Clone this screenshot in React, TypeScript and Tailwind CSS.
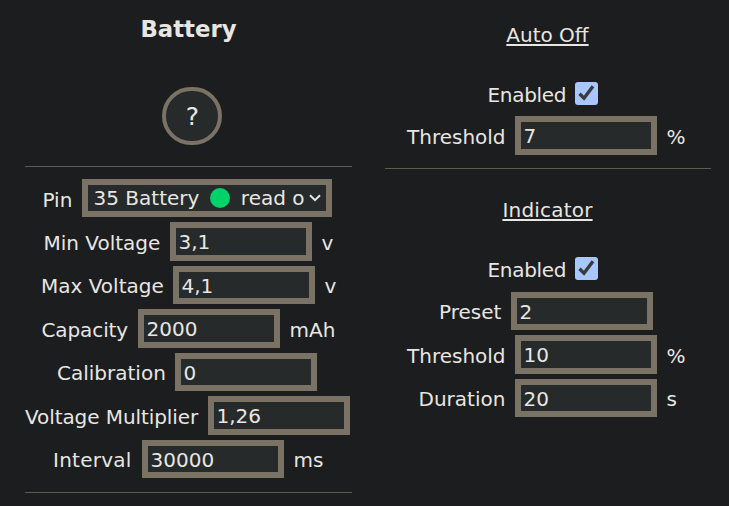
import { ReactNode } from "react";

const BOX =
  "h-[38.4px] shrink-0 border-[6px] border-[#7a7264] bg-[#262a2b] leading-[28px] whitespace-pre";

type FieldProps = {
  label: string;
  value: string;
  unit?: string;
  indent: string;
  labelWidth: string;
};

function Field({ label, value, unit, indent, labelWidth }: FieldProps) {
  return (
    <div className={`flex h-[43.5px] items-start ${indent}`}>
      <span className={`shrink-0 pt-[4.4px] leading-[32px] whitespace-nowrap ${labelWidth}`}>{label}</span>
      <div className={`w-[142px] pl-[2.5px] ${BOX}`}>{value}</div>
      {unit && <span className="pl-[9.5px] pt-[4.4px] leading-[32px]">{unit}</span>}
    </div>
  );
}

function Rule() {
  return <div className="h-px w-[327px] bg-[#615b4d]" />;
}

function Enabled() {
  return (
    <div className="flex h-6 items-start pl-[103.5px]">
      <span className="w-[87.5px] shrink-0 leading-[26px] tracking-[-0.3px]">Enabled</span>
      <svg className="h-[23px] w-[23px] shrink-0" viewBox="0 0 23 23">
        <rect width="23" height="23" rx="3" fill="#a8c7ff" />
        <path d="M4.5 11.8 L9 16.2 L18 4.3" fill="none" stroke="#3b3b3b" strokeWidth="3.4" />
      </svg>
    </div>
  );
}

function SectionTitle({ children }: { children: ReactNode }) {
  return (
    <div className="w-[327px] text-center leading-[26px]">
      <span className="underline decoration-2 underline-offset-[2px] [text-decoration-skip-ink:none]">{children}</span>
    </div>
  );
}

export default function App() {
  return (
    <div className="flex h-[506px] w-[729px] overflow-hidden bg-[#1c1d1e] font-['Verdana','DejaVu_Sans',sans-serif] text-[20px] text-[#e8e6e3]">
      <section className="w-[360px] shrink-0 pl-[25px]">
        <h1 className="mt-[15px] h-[28px] w-[327px] text-center text-[22.8px] leading-[28px] font-bold">Battery</h1>
        <div className="mt-[44px] ml-[137px] flex h-[58px] w-[60px] items-center justify-center rounded-full border-4 border-[#7a7264] bg-[#262a2b] pt-[2px] pl-px text-[25px]">
          ?
        </div>
        <div className="mt-[21px]"><Rule /></div>
        <div className="mt-[11.8px]">
          <div className="flex h-[43.5px] items-start pl-[17.5px]">
            <span className="w-[39.5px] shrink-0 pt-[5px] leading-[32px]">Pin</span>
            <div className={`flex w-[250px] items-center pl-[5.5px] ${BOX}`}>
              <span>35 Battery</span>
              <span className="mt-px ml-[10.5px] h-5 w-5 rounded-full bg-[#00d26a]" />
              <span className="ml-[11px]">read o</span>
              <svg className="ml-[4.5px] h-[8px] w-[12px]" viewBox="0 0 12 8">
                <path d="M1 1.2 L6 6.2 L11 1.2" fill="none" stroke="#e8e6e3" strokeWidth="2" />
              </svg>
            </div>
          </div>
          <Field label="Min Voltage" value="3,1" unit="v" indent="pl-[18.5px]" labelWidth="w-[126.5px]" />
          <Field label="Max Voltage" value="4,1" unit="v" indent="pl-[16px]" labelWidth="w-[132px]" />
          <Field label="Capacity" value="2000" unit="mAh" indent="pl-[16.5px]" labelWidth="w-[96.5px] tracking-[-0.1px]" />
          <Field label="Calibration" value="0" indent="pl-[32px]" labelWidth="w-[118px]" />
          <Field label="Voltage Multiplier" value="1,26" indent="pl-0" labelWidth="w-[183px] tracking-[-0.08px]" />
          <Field label="Interval" value="30000" unit="ms" indent="pl-[28px]" labelWidth="w-[89px] tracking-[0.25px]" />
        </div>
        <div className="mt-[8.7px]"><Rule /></div>
      </section>
      <section className="w-[369px] shrink-0 pl-[24px]">
        <div className="mt-[22px]"><SectionTitle>Auto Off</SectionTitle></div>
        <div className="mt-[34px]"><Enabled /></div>
        <div className="mt-[10.3px] ml-px">
          <Field label="Threshold" value="7" unit="%" indent="pl-[22px]" labelWidth="w-[108px]" />
        </div>
        <div className="mt-[8.2px] ml-px w-[326px] overflow-hidden"><Rule /></div>
        <div className="mt-[28px]"><SectionTitle><span className="tracking-[0.2px]">Indicator</span></SectionTitle></div>
        <div className="mt-[34px]"><Enabled /></div>
        <div className="mt-[10.8px] ml-px">
          <Field label="Preset" value="2" indent="pl-[54px]" labelWidth="w-[72px]" />
          <Field label="Threshold" value="10" unit="%" indent="pl-[22px]" labelWidth="w-[108px]" />
          <Field label="Duration" value="20" unit="s" indent="pl-[33.5px]" labelWidth="w-[96.5px]" />
        </div>
      </section>
    </div>
  );
}
